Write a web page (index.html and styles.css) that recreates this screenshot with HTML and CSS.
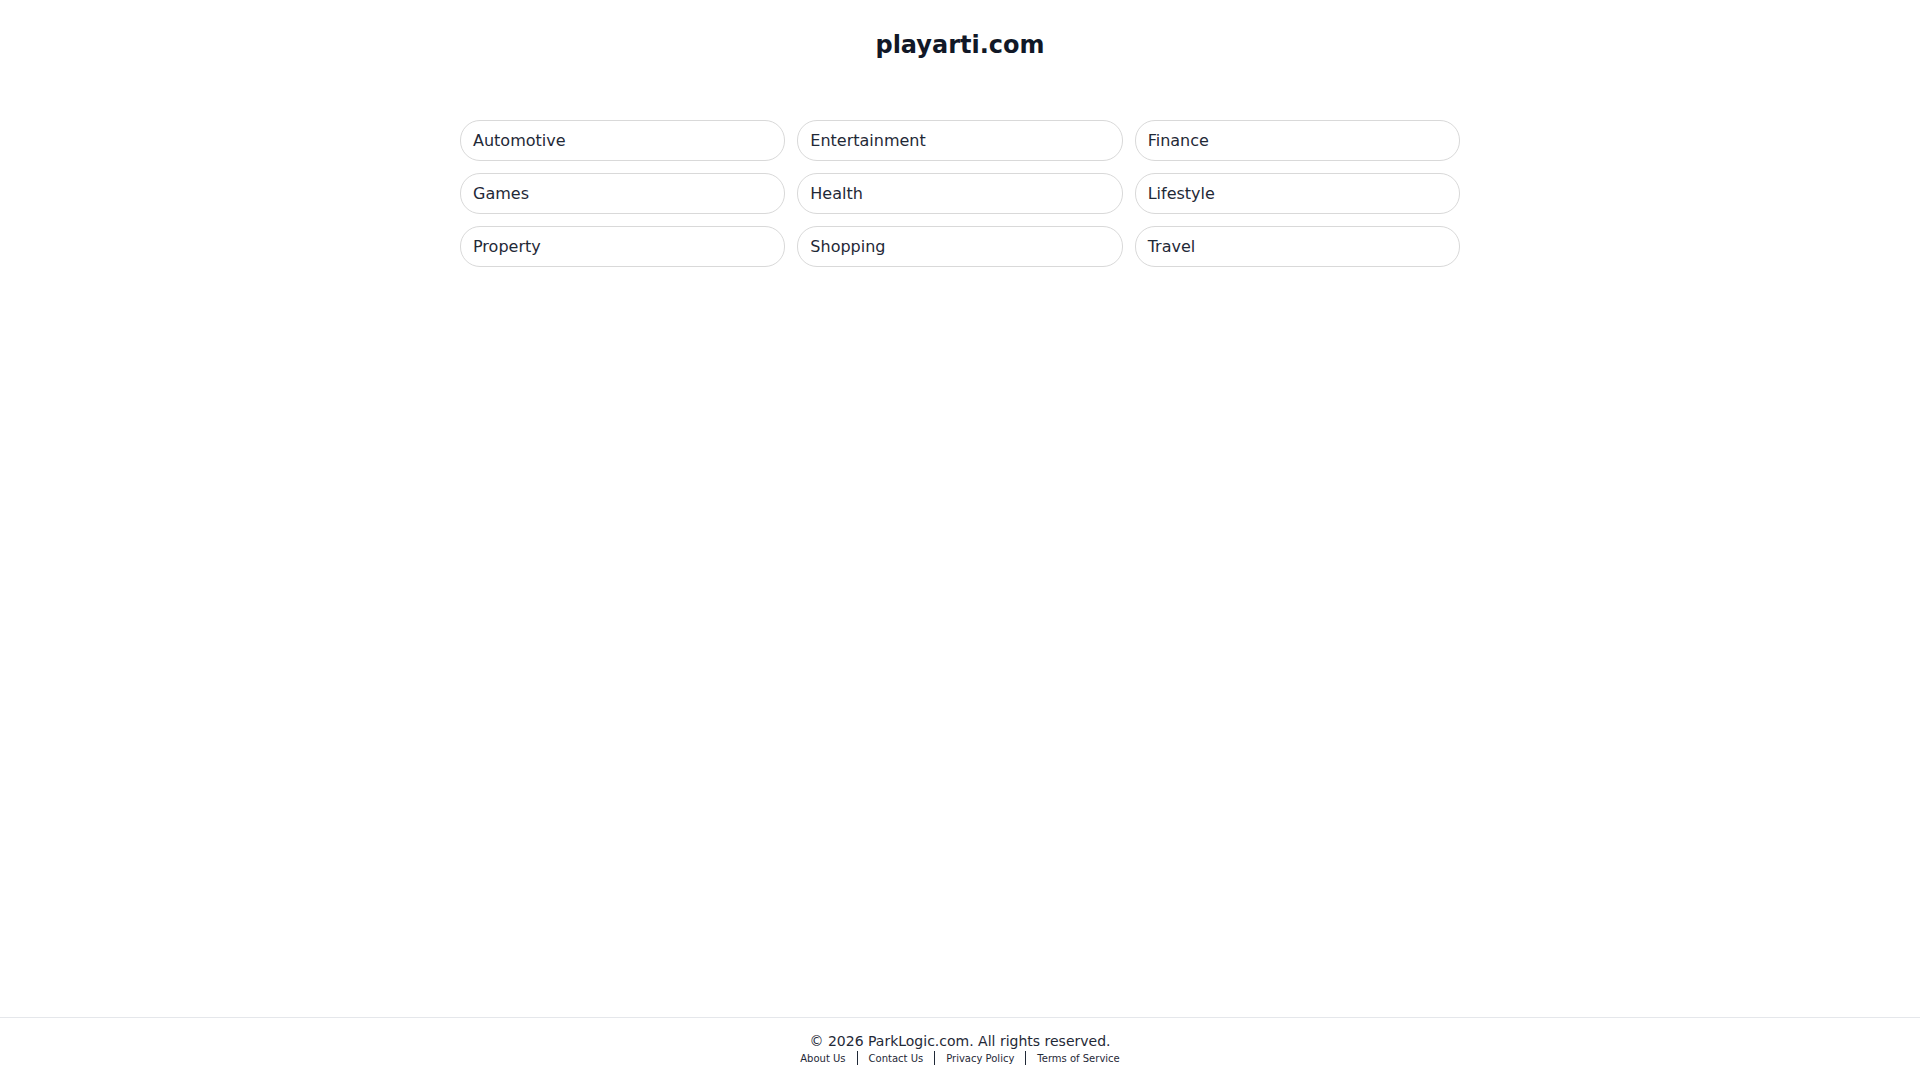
FILE: index.html
```html
<!DOCTYPE html>
<html>
<head>
  <title>playarti.com</title>
  <link rel="stylesheet" href="styles.css">
</head>
<body>
  <div class="page">
    <main class="content">
      <h1 class="domain">playarti.com</h1>

      <div class="categories">
        <a class="category" href="#">Automotive</a>
        <a class="category" href="#">Entertainment</a>
        <a class="category" href="#">Finance</a>
        <a class="category" href="#">Games</a>
        <a class="category" href="#">Health</a>
        <a class="category" href="#">Lifestyle</a>
        <a class="category" href="#">Property</a>
        <a class="category" href="#">Shopping</a>
        <a class="category" href="#">Travel</a>
      </div>
    </main>

    <footer class="footer">
      <div class="copyright">&copy; 2026 ParkLogic.com. All rights reserved.</div>
      <div class="links">
        <a href="#">About Us</a>
        <span class="sep"></span>
        <a href="#">Contact Us</a>
        <span class="sep"></span>
        <a href="#">Privacy Policy</a>
        <span class="sep"></span>
        <a href="#">Terms of Service</a>
      </div>
    </footer>
  </div>
</body>
</html>
```

FILE: styles.css
```css
html, body {
  margin: 0;
  padding: 0;
}
body {
  font-family: 'DejaVu Sans', Verdana, sans-serif;
  background-color: #fff;
  color: #1f2937;
}
.page {
  min-height: 100vh;
  display: flex;
  flex-direction: column;
}
.content {
  flex: 1;
  padding-top: 31px;
}
.domain {
  margin: 0;
  text-align: center;
  font-size: 24px;
  font-weight: bold;
  color: #111827;
}
.categories {
  max-width: 1000px;
  margin: 61px auto 0;
  display: grid;
  grid-template-columns: repeat(3, 1fr);
  gap: 12px;
}
.category {
  display: block;
  padding: 10px 12px;
  border: 1px solid #d9d9d9;
  border-radius: 20px;
  font-size: 16px;
  color: #1f2937;
  text-decoration: none;
}
.footer {
  border-top: 1px solid #e5e7eb;
  padding: 15px 0 15px;
  text-align: center;
}
.copyright {
  font-size: 14px;
  color: #1f2937;
}
.links {
  margin-top: 2px;
  display: flex;
  justify-content: center;
  align-items: center;
  gap: 11px;
  font-size: 10px;
}
.links a {
  color: #1f2937;
  text-decoration: none;
}
.sep {
  width: 1px;
  height: 14px;
  background-color: #1f2937;
}
```
